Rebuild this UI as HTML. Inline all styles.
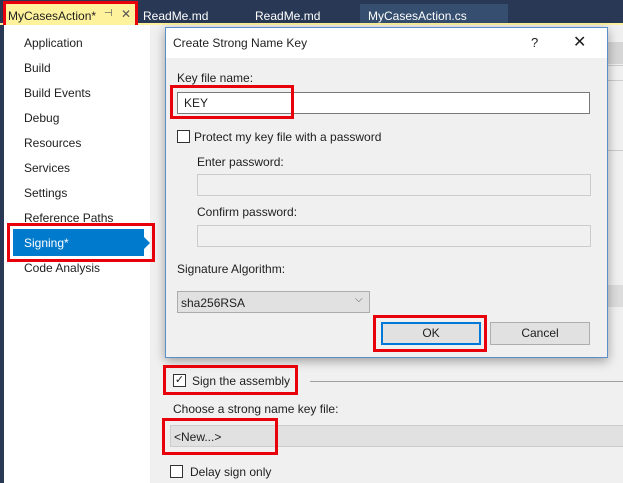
<!DOCTYPE html>
<html><head><style>
*{margin:0;padding:0;box-sizing:border-box}
body{width:623px;height:483px;overflow:hidden;background:#f0f0f0;font-family:"Liberation Sans",sans-serif;font-size:12px;color:#1e1e1e;position:relative}
.a{position:absolute}
.red{position:absolute;border:3px solid #e8000b}
.cb{position:absolute;width:13px;height:13px;border:1px solid #333;background:#fff}
.in{position:absolute;border:1px solid #ccc;background:#f0f0f0}
.side div{position:absolute;left:24px;font-size:12px}
</style></head><body>
<div class="a" style="left:0;top:0;width:623px;height:25px;background:#293955"></div>
<div class="a" style="left:360px;top:4px;width:148px;height:21px;background:#364e6f"></div>
<div class="a" style="left:0;top:23px;width:623px;height:2px;background:#fff29d"></div>
<div class="a" style="left:3px;top:3px;width:134px;height:27px;background:#fff29d"></div>
<div class="a" style="left:8px;top:9px;font-size:12px">MyCasesAction*</div>
<div class="a" style="left:104px;top:8px;font-size:10px;color:#555">⊣</div>
<div class="a" style="left:121px;top:7px;font-size:12px;color:#555">✕</div>
<div class="red" style="left:3px;top:1px;width:135px;height:32px"></div>
<div class="a" style="left:143px;top:9px;font-size:12px;color:#fff">ReadMe.md</div>
<div class="a" style="left:255px;top:9px;font-size:12px;color:#fff">ReadMe.md</div>
<div class="a" style="left:368px;top:9px;font-size:12px;color:#fff">MyCasesAction.cs</div>
<div class="a" style="left:0;top:25px;width:150px;height:458px;background:#fff"></div>
<div class="a" style="left:0;top:25px;width:4px;height:458px;background:#293955"></div>
<div class="side">
<div style="top:36px">Application</div><div style="top:61px">Build</div><div style="top:86px">Build Events</div><div style="top:111px">Debug</div><div style="top:136px">Resources</div><div style="top:161px">Services</div><div style="top:186px">Settings</div><div style="top:211px">Reference Paths</div><div style="top:261px">Code Analysis</div>
</div>
<div class="a" style="left:13px;top:229px;width:131px;height:27px;background:#007acc"></div>
<div class="a" style="left:144px;top:237px;width:0;height:0;border-top:6px solid transparent;border-bottom:6px solid transparent;border-left:6px solid #007acc"></div>
<div class="a" style="left:24px;top:236px;color:#fff">Signing*</div>
<div class="red" style="left:7px;top:223px;width:148px;height:39px"></div>
<div class="a" style="left:600px;top:42px;width:23px;height:22px;background:#d6d6d6"></div>
<div class="a" style="left:600px;top:65px;width:23px;height:1px;background:#ccc"></div>
<div class="a" style="left:600px;top:80px;width:23px;height:1px;background:#ccc"></div>
<div class="a" style="left:600px;top:150px;width:23px;height:1px;background:#ccc"></div>
<div class="a" style="left:600px;top:285px;width:23px;height:22px;background:#ddd"></div>
<div class="a" style="left:165px;top:27px;width:443px;height:331px;background:#f0f0f0;border:1px solid #5b8fc7;box-shadow:0 3px 10px rgba(0,0,0,.35)"></div>
<div class="a" style="left:166px;top:28px;width:441px;height:30px;background:#fff"></div>
<div class="a" style="left:173px;top:36px">Create Strong Name Key</div>
<div class="a" style="left:531px;top:35px;font-size:13px">?</div>
<div class="a" style="left:573px;top:32px;font-size:16px">✕</div>
<div class="a" style="left:177px;top:71px">Key file name:</div>
<div class="a" style="left:177px;top:92px;width:413px;height:22px;background:#fff;border:1px solid #7a7a7a"></div>
<div class="a" style="left:184px;top:96px">KEY</div>
<div class="red" style="left:170px;top:85px;width:124px;height:34px"></div>
<div class="cb" style="left:177px;top:130px"></div>
<div class="a" style="left:194px;top:130px">Protect my key file with a password</div>
<div class="a" style="left:197px;top:155px">Enter password:</div>
<div class="in" style="left:197px;top:174px;width:394px;height:22px"></div>
<div class="a" style="left:197px;top:205px">Confirm password:</div>
<div class="in" style="left:197px;top:225px;width:394px;height:22px"></div>
<div class="a" style="left:177px;top:262px">Signature Algorithm:</div>
<div class="a" style="left:177px;top:291px;width:193px;height:22px;background:#e1e1e1;border:1px solid #acacac"></div>
<div class="a" style="left:181px;top:296px">sha256RSA</div>
<div class="a" style="left:355px;top:294px;font-size:10px;color:#555">⌵</div>
<div class="a" style="left:381px;top:322px;width:100px;height:23px;background:#e1e1e1;border:2px solid #0078d7;text-align:center;line-height:19px">OK</div>
<div class="red" style="left:373px;top:315px;width:114px;height:37px"></div>
<div class="a" style="left:490px;top:322px;width:100px;height:23px;background:#e1e1e1;border:1px solid #adadad;text-align:center;line-height:21px">Cancel</div>
<div class="cb" style="left:173px;top:374px;text-align:center;line-height:11px;font-size:11px">✓</div>
<div class="a" style="left:192px;top:374px">Sign the assembly</div>
<div class="red" style="left:163px;top:365px;width:135px;height:30px"></div>
<div class="a" style="left:310px;top:381px;width:313px;height:1px;background:#a0a0a0"></div>
<div class="a" style="left:173px;top:402px">Choose a strong name key file:</div>
<div class="a" style="left:170px;top:425px;width:460px;height:22px;background:#e1e1e1;border:1px solid #ccc"></div>
<div class="a" style="left:174px;top:430px">&lt;New...&gt;</div>
<div class="red" style="left:162px;top:418px;width:116px;height:37px"></div>
<div class="cb" style="left:170px;top:465px"></div>
<div class="a" style="left:190px;top:465px">Delay sign only</div>
</body></html>
